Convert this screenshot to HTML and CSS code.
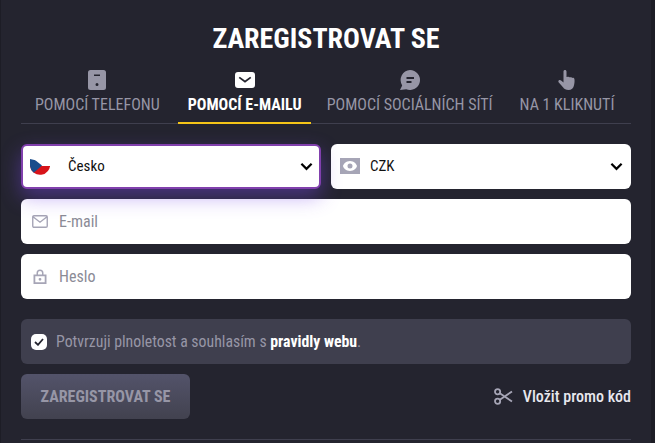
FILE: index.html
```html
<!DOCTYPE html>
<html lang="cs">
  <head>
    <meta charset="UTF-8" />
    <meta name="viewport" content="width=device-width, initial-scale=1.0" />
    <title>Zaregistrovat se</title>
    <link rel="stylesheet" href="styles.css">
  </head>
  <body>
    <div class="modal">
      <h1 class="title">ZAREGISTROVAT SE</h1>

      <nav class="tabs">
        <a class="tab">
          <svg class="tab-icon" width="20" height="20" viewBox="0 0 20 20"><path fill="currentColor" fill-rule="evenodd" d="M3.500 0h13A2.500 2.500 0 0 1 19 2.500v15a2.500 2.500 0 0 1-2.500 2.500h-13A2.500 2.500 0 0 1 1 17.500v-15A2.500 2.500 0 0 1 3.500 0zM7 4.500v1.500h6V4.500zM10 13a1.500 1.500 0 1 0 0 3 1.500 1.500 0 0 0 0-3z"/></svg>
          <span>POMOCÍ TELEFONU</span>
        </a>
        <a class="tab active">
          <svg class="tab-icon" width="20" height="20" viewBox="0 0 20 20"><path fill="currentColor" fill-rule="evenodd" d="M3 2h14a3 3 0 0 1 3 3v10a3 3 0 0 1-3 3H3a3 3 0 0 1-3-3V5a3 3 0 0 1 3-3zM4.800 6.800 3.700 8l6.300 4.800L16.300 8l-1.100-1.200L10 10.600z"/></svg>
          <span>POMOCÍ E-MAILU</span>
        </a>
        <a class="tab">
          <svg class="tab-icon" width="20" height="20" viewBox="0 0 20 20"><path fill="currentColor" fill-rule="evenodd" d="M10 0a10 10 0 1 1-3.800 19.250L0 20l2.200-4.600A10 10 0 0 1 10 0zM6.500 7v2h7.500V7zM6.500 11v2h5v-2z"/></svg>
          <span>POMOCÍ SOCIÁLNÍCH SÍTÍ</span>
        </a>
        <a class="tab">
          <svg class="tab-icon" width="20" height="20" viewBox="0 0 20 20"><path fill="currentColor" d="M6.500 1.500C6.500.5 7.200 0 8 0s1.500.6 1.500 1.500V7l1.500-.3c.8-.1 1.200.2 1.500.6l1.500-.1c.7 0 1.100.3 1.400.7 1-.2 1.800.3 2 1.200.3 1.600.2 4-.4 6.200C16.500 18.500 14.500 20 11.500 20c-2.500 0-4.300-1-5.500-2.800L1.800 12.500c-.7-.8-.5-1.800.1-2.300.7-.5 1.500-.4 2.200.2l2.400 2z"/></svg>
          <span>NA 1 KLIKNUTÍ</span>
        </a>
      </nav>

      <form class="form">
        <div class="row">
          <div class="select focused">
            <svg class="flag" width="20" height="20" viewBox="0 0 20 20"><defs><clipPath id="flag-clip"><path d="M0 3 20 7.500A10 10 0 0 1 0 10z"/></clipPath></defs><g clip-path="url(#flag-clip)"><rect width="20" height="20" fill="#fff"/><rect y="10" width="20" height="10" fill="#d7141a"/><path d="M0 0 12 9.500 0 20z" fill="#1a4d8c"/></g></svg>
            <span class="select-text flag-text">Česko</span>
            <svg class="chevron" width="13" height="9" viewBox="0 0 14 9"><path d="M1.500 1.500 7 7l5.500-5.500" fill="none" stroke="#000" stroke-width="2.400"/></svg>
          </div>
          <div class="select">
            <svg class="money" width="20" height="16" viewBox="0 0 20 16"><path fill="#a6a5b6" fill-rule="evenodd" d="M0 0h20v16H0zM10 3C6 3 3.500 6 3 8c.5 2 3 5 7 5s6.500-3 7-5c-.5-2-3-5-7-5zM10 5.500a2.500 2.500 0 1 1 0 5 2.500 2.500 0 0 1 0-5z"/></svg>
            <span class="select-text">CZK</span>
            <svg class="chevron" width="13" height="9" viewBox="0 0 14 9"><path d="M1.500 1.500 7 7l5.500-5.500" fill="none" stroke="#000" stroke-width="2.400"/></svg>
          </div>
        </div>

        <label class="field">
          <svg width="16" height="13" viewBox="0 0 16 13"><path d="M2 .75h12c.7 0 1.250.55 1.250 1.250v9c0 .7-.55 1.250-1.250 1.250H2c-.7 0-1.250-.55-1.250-1.250V2C.75 1.300 1.300.75 2 .75zM1 1.800l7 5.400 7-5.400" fill="none" stroke="#a6a5b6" stroke-width="1.400"/></svg>
          <input type="text" placeholder="E-mail">
        </label>

        <label class="field">
          <svg width="16" height="15" viewBox="0 0 16 15"><path fill="#a6a5b6" fill-rule="evenodd" d="M4.500 5.500V4a3.500 3.500 0 0 1 7 0v1.500H14.500V15H1.500V5.500zM6 5.500h4V4a2 2 0 0 0-4 0zM3.300 7.300v6h9.400v-6zM8 8.900a1.400 1.400 0 1 1 0 2.800A1.400 1.400 0 0 1 8 8.900z"/></svg>
          <input type="password" placeholder="Heslo">
        </label>

        <div class="agree">
          <span class="check">
            <svg width="10" height="8" viewBox="0 0 10 8"><path d="M1 4l3 2.800L9 1" fill="none" stroke="#24242f" stroke-width="1.800"/></svg>
          </span>
          <span>Potvrzuji plnoletost a souhlasím s <a class="rules">pravidly webu</a>.</span>
        </div>

        <div class="actions">
          <button type="button" class="submit">ZAREGISTROVAT SE</button>
          <a class="promo">
            <svg width="19" height="17" viewBox="0 0 19 17"><g fill="none" stroke="#a6a5b6" stroke-width="1.800"><circle cx="3.600" cy="3.800" r="2.600"/><circle cx="3.600" cy="13.200" r="2.600"/><path d="M5.800 5.300 18 13.500M5.800 11.700 18 3.500"/></g></svg>
            <span>Vložit promo kód</span>
          </a>
        </div>
      </form>

      <div class="divider"></div>
    </div>
  </body>
</html>
```

FILE: styles.css
```css
html,
body {
  height: 100%;
}

body {
  margin: 0;
  overflow: hidden;
  background-color: #1d1d26;
  font-family: "Roboto Condensed", Roboto, sans-serif;
  font-stretch: 75%;
}

.modal {
  margin: 0 4px 0 1px;
  height: 100%;
  padding: 0 20px;
  background-color: #24242f;
}

.title {
  margin: 0;
  padding-top: 23px;
  height: 44px;
  line-height: 32px;
  text-align: center;
  font-size: 28px;
  font-weight: 700;
  color: white;
}

.tabs {
  display: flex;
  gap: 7px;
  padding-left: 4px;
  border-bottom: 1px solid #3f3f4e;
  height: 56px;
}

.tab {
  display: flex;
  flex-direction: column;
  align-items: center;
  padding: 3px 10px 0;
  margin-bottom: -1px;
  font-size: 16px;
  line-height: 19px;
  color: #9796a6;
  white-space: nowrap;
}

.tab-icon {
  margin-bottom: 5px;
  flex-shrink: 0;
}

.tab.active {
  margin: 0 -1px -1px 1px;
  padding-right: 9px;
  color: white;
  font-weight: 700;
  border-bottom: 2px solid #f5c518;
}

.form {
  display: flex;
  flex-direction: column;
  gap: 10px;
  padding-top: 20px;
}

.row {
  display: grid;
  grid-template-columns: 1fr 1fr;
  gap: 10px;
}

.select,
.field {
  display: flex;
  align-items: center;
  height: 45px;
  box-sizing: border-box;
  background-color: white;
  border-radius: 6px;
}

.select {
  padding: 0 8px 1px 9px;
  color: #111;
  font-size: 15px;
}

.select.focused {
  position: relative;
  z-index: 1;
  padding: 0 6px 1px 7px;
  border: 2px solid #8140ad;
  box-shadow: 0 8px 20px rgba(120, 70, 230, 0.45);
}

.flag {
  flex-shrink: 0;
}

.flag-text {
  margin-left: 18px;
}

.money {
  margin-right: 10px;
}

.select-text {
  flex: 1;
}

.chevron {
  flex-shrink: 0;
}

.field {
  gap: 11px;
  padding: 0 11px;
}

.field input {
  flex: 1;
  border: none;
  outline: none;
  padding: 0;
  font: inherit;
  font-size: 16px;
  background: none;
}

.field input::placeholder {
  color: #8b8b96;
}

.agree {
  display: flex;
  align-items: center;
  gap: 9px;
  height: 45px;
  margin-top: 10px;
  padding: 0 10px;
  background-color: #3f3f4e;
  border-radius: 6px;
  font-size: 15.800px;
  color: #9796a6;
}

.check {
  display: flex;
  align-items: center;
  justify-content: center;
  width: 16px;
  height: 16px;
  background-color: white;
  border-radius: 5px;
}

.rules {
  color: white;
  font-weight: 700;
}

.actions {
  display: flex;
  justify-content: space-between;
  align-items: center;
}

.submit {
  width: 169px;
  height: 45px;
  border: none;
  border-radius: 6px;
  background-image: linear-gradient(#53536a, #42424f);
  color: #9796a6;
  font: inherit;
  font-size: 16px;
  font-weight: 700;
}

.promo {
  display: flex;
  align-items: center;
  gap: 10px;
  font-size: 16px;
  font-weight: 500;
  color: #e8e8ee;
}

.divider {
  margin-top: 20px;
  border-top: 1px solid #3f3f4e;
}
```
